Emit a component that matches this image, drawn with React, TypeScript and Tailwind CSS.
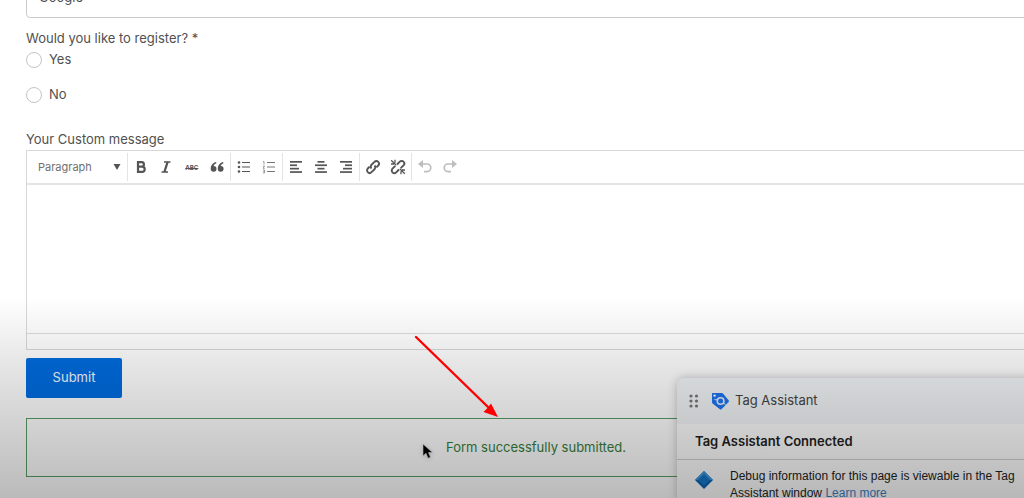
import type { ReactNode } from 'react';

type Tool = { label: string; icon: ReactNode; disabled?: boolean };

const bars = (rows: number[][]) => (
  <svg viewBox="0 0 14 14" className="size-3.5" fill="currentColor">
    {rows.map(([x, w], i) => (
      <rect key={i} x={x} y={1 + i * 3.4} width={w} height={1.7} />
    ))}
  </svg>
);

const undoIcon = (
  <svg viewBox="0 0 16 16" className="size-4" fill="none" stroke="currentColor" strokeWidth="1.7">
    <path d="M4 5h6a3.8 3.8 0 0 1 0 7.6H7" />
    <path d="M6 1v8L1 5z" fill="currentColor" stroke="none" />
  </svg>
);

const redoIcon = (
  <svg viewBox="0 0 16 16" className="size-4" fill="none" stroke="currentColor" strokeWidth="1.7">
    <path d="M12 5H6a3.8 3.8 0 0 0 0 7.6h3" />
    <path d="M10 1v8l5-4z" fill="currentColor" stroke="none" />
  </svg>
);

const textTools: Tool[] = [
  {
    label: 'Bold',
    icon: (
      <svg viewBox="0 0 14 14" className="size-3.5" fill="none" stroke="currentColor" strokeWidth="2.2">
        <path d="M4 2.1h3.6a2.3 2.3 0 0 1 0 4.6H4zM4 6.7h4.1a2.6 2.6 0 0 1 0 5.2H4z" />
      </svg>
    ),
  },
  {
    label: 'Italic',
    icon: (
      <svg viewBox="0 0 14 14" className="size-3.5" fill="none" stroke="currentColor">
        <path d="M5 2h6.5M2.5 12H9" strokeWidth="1.5" />
        <path d="M8.6 2L5.4 12" strokeWidth="2.3" />
      </svg>
    ),
  },
  {
    label: 'Strikethrough',
    icon: <span className="text-[6px] font-bold line-through">ABC</span>,
  },
  {
    label: 'Blockquote',
    icon: (
      <svg viewBox="0 0 14 14" className="size-3.5" fill="currentColor">
        <path d="M6.2 2C3 2.6.7 5 .7 8.9a2.9 2.9 0 1 0 3-3c.2-1.2 1.1-2 2.5-2.4z" />
        <path d="M13.3 2C10.1 2.6 7.8 5 7.8 8.9a2.9 2.9 0 1 0 3-3c.2-1.2 1.1-2 2.5-2.4z" />
      </svg>
    ),
  },
];

const listTools: Tool[] = [
  {
    label: 'Bullet list',
    icon: (
      <svg viewBox="0 0 14 14" className="size-3.5" fill="currentColor">
        <circle cx="2" cy="2.5" r="1.3" />
        <circle cx="2" cy="7" r="1.3" />
        <circle cx="2" cy="11.5" r="1.3" />
        <path d="M5 2h8v1H5zM5 6.5h8v1H5zM5 11h8v1H5z" />
      </svg>
    ),
  },
  {
    label: 'Numbered list',
    icon: (
      <svg viewBox="0 0 14 14" className="size-3.5 opacity-80" fill="none" stroke="currentColor">
        <path d="M1 1.5h1v3M.8 6h1.8L1 8.3h1.7M.8 10h1.8v3H.8M1.2 11.5h1.4" strokeWidth=".7" />
        <path d="M5 2.5h8M5 7h8M5 11.5h8" />
      </svg>
    ),
  },
];

const alignTools: Tool[] = [
  { label: 'Align left', icon: bars([[1, 12], [1, 7], [1, 9], [1, 12]]) },
  { label: 'Align center', icon: bars([[3.5, 7], [1, 12], [3.5, 7], [1, 12]]) },
  { label: 'Align right', icon: bars([[1, 12], [6, 7], [4, 9], [1, 12]]) },
];

const linkTools: Tool[] = [
  {
    label: 'Insert link',
    icon: (
      <svg viewBox="0 0 16 16" className="size-4" fill="none" stroke="currentColor" strokeWidth="1.9">
        <path d="M6.5 9.5a2.6 2.6 0 0 1 0-3.7l3-3a2.6 2.6 0 0 1 3.7 3.7l-1.8 1.8" />
        <path d="M9.5 6.5a2.6 2.6 0 0 1 0 3.7l-3 3a2.6 2.6 0 0 1-3.7-3.7l1.8-1.8" />
      </svg>
    ),
  },
  {
    label: 'Remove link',
    icon: (
      <svg viewBox="0 0 16 16" className="size-4" fill="none" stroke="currentColor" strokeWidth="1.9">
        <path d="M7 5.500l2.800-2.800a2.600 2.600 0 0 1 3.700 3.700L10.700 9.200M9 10.500l-2.800 2.800a2.600 2.600 0 0 1-3.700-3.700L5.300 6.800" />
        <path d="M1.200 1.200l5 5M1 5h3M5 .8v3M14.800 14.800l-5-5M15 11h-3M11 15.200v-3" strokeWidth="1.300" />
      </svg>
    ),
  },
];

const historyTools: Tool[] = [
  { label: 'Undo', icon: undoIcon, disabled: true },
  { label: 'Redo', icon: redoIcon, disabled: true },
];

function ToolGroup({ tools, className }: { tools: Tool[]; className: string }) {
  return (
    <div className={`flex shrink-0 border-l border-[#e4e4e4] ${className}`}>
      {tools.map((tool) => (
        <button
          key={tool.label}
          type="button"
          aria-label={tool.label}
          disabled={tool.disabled}
          className="flex flex-1 items-center justify-center text-[#555] disabled:text-[#bdbdbd]"
        >
          {tool.icon}
        </button>
      ))}
    </div>
  );
}

function Choice({ label }: { label: string }) {
  return (
    <label className="flex h-5 items-center gap-[7px]">
      <input
        type="radio"
        name="register"
        value={label}
        className="size-4 appearance-none rounded-full border border-[#c4c4c4] bg-white checked:border-4 checked:border-[#0064cd]"
      />
      {label}
    </label>
  );
}

function TagAssistant() {
  return (
    <aside className="absolute top-[378px] -right-10 left-[677px] overflow-hidden rounded-tl-lg bg-[#fcfcfc] font-['Liberation_Sans',Arial,sans-serif] text-[#222] shadow-[0_0_10px_rgba(0,0,0,0.25)]">
      <header className="flex h-[46px] items-center bg-[#f1f4f6] pl-3 font-[Inter,sans-serif] text-[13px] text-[#444]">
        <svg viewBox="0 0 10 16" className="h-4 w-2.5" fill="#777">
          {[3, 8, 13].map((y) => (
            <g key={y}>
              <circle cx="2" cy={y} r="1.6" />
              <circle cx="7.5" cy={y} r="1.6" />
            </g>
          ))}
        </svg>
        <svg viewBox="0 0 18 18" className="ml-3 size-[18px]">
          <path d="M1.500 1h9a2 2 0 0 1 1.500.6l5.400 6.500a1.500 1.500 0 0 1 0 2.100l-6.700 6.900a1.500 1.500 0 0 1-2.100 0L1.800 11.800a2 2 0 0 1-.8-1.500V1.500a.5.5 0 0 1 .5-.5z" fill="#1f74f0" />
          <circle cx="3.600" cy="3.600" r="1.200" fill="#fff" />
          <circle cx="9.600" cy="9" r="3.300" fill="none" stroke="#e4efff" strokeWidth="1.600" />
          <path d="M3.500 7.500L6.500 8M12.500 11l2 1.500" fill="none" stroke="#e4efff" strokeWidth="1" />
        </svg>
        <span className="ml-1.5">Tag Assistant</span>
      </header>
      <h2 className="flex h-9 items-center border-b border-[#d0d0d0] pl-[18px] font-[Inter,sans-serif] text-[13px] font-semibold">
        Tag Assistant Connected
      </h2>
      <div className="flex gap-4 pt-2 pl-[17px]">
        <svg viewBox="0 0 20 20" className="mt-0.5 size-5 shrink-0">
          <path d="M10 1l9 9-9 9-9-9z" fill="#0b63ae" />
          <path d="M10 1l9 9H1z" fill="#3e97e2" />
          <path d="M10 4l6 6-6 6-6-6z" fill="#1675c8" />
        </svg>
        <p className="text-xs leading-[17px] whitespace-nowrap">
          Debug information for this page is viewable in the Tag
          <br />
          Assistant window <a href="#learn" className="text-[#3a80c4] underline">Learn more</a>
        </p>
      </div>
    </aside>
  );
}

export default function App() {
  return (
    <main className="relative h-screen overflow-hidden bg-white font-[Inter,sans-serif] text-[13px] text-[#505050]">
      <form className="-mt-[22px] -mr-[22px] ml-[26px] flex flex-col" onSubmit={(e) => e.preventDefault()}>
        <div className="relative">
          <select
            aria-label="Source"
            className="h-10 w-full appearance-none rounded-sm border border-[#cacaca] bg-white px-3"
          >
            <option>Google</option>
          </select>
          <svg viewBox="0 0 10 6" className="pointer-events-none absolute top-[17px] right-6 h-1.5 w-2.5" fill="none" stroke="#999">
            <path d="M1 1l4 4 4-4" />
          </svg>
        </div>

        <fieldset className="mt-2.5 flex flex-col">
          <legend className="contents">
            <span className="h-5 leading-5">Would you like to register? *</span>
          </legend>
          <div className="mt-0.5 flex flex-col gap-[15px]">
            <Choice label="Yes" />
            <Choice label="No" />
          </div>
        </fieldset>

        <label htmlFor="message" className="mt-6 h-5 leading-5">
          Your Custom message
        </label>
        <section className="mt-px border border-[#d8d8d8]">
          <div className="flex h-[34px] border-b-2 border-[#e4e4e4] py-0.5">
            <div className="relative flex w-[100px] shrink-0 items-center">
              <select
                aria-label="Block format"
                className="w-full appearance-none bg-transparent pl-[11px] text-[11px] text-[#707070]"
              >
                <option>Paragraph</option>
              </select>
              <svg viewBox="0 0 8 6" className="pointer-events-none absolute right-1.5 h-1.5 w-2" fill="#555">
                <path d="M.5 0h7L4 6z" />
              </svg>
            </div>
            <ToolGroup tools={textTools} className="w-[103px]" />
            <ToolGroup tools={listTools} className="w-[52px]" />
            <ToolGroup tools={alignTools} className="w-[77px]" />
            <ToolGroup tools={linkTools} className="w-[52px]" />
            <ToolGroup tools={historyTools} className="w-[52px]" />
          </div>
          <textarea id="message" className="block h-[148px] w-full resize-none bg-transparent p-3 outline-none" />
          <div className="h-4 border-t border-[#dcdcdc]" />
        </section>

        <button type="submit" className="mt-2 h-10 w-24 rounded-xs bg-[#006ce0] text-[#f4faff]">
          Submit
        </button>

        <p role="status" className="mt-5 flex h-[59px] items-center justify-center border border-[#5a9c66] text-[#367e3a]">
          Form successfully submitted.
        </p>
      </form>

      <TagAssistant />

      <div className="pointer-events-none absolute inset-x-0 bottom-0 h-[200px] bg-linear-to-b from-black/0 via-black/10 via-33% to-black/27" />

      <svg viewBox="0 0 90 90" className="pointer-events-none absolute top-[330px] left-[410px] size-[90px]">
        <path d="M6 7l73 71" fill="none" stroke="#f00" strokeWidth="2.4" strokeLinecap="round" />
        <path d="M88 87l-14.500-5 3.500-3.500 4-5z" fill="#f00" />
      </svg>
      <svg viewBox="0 0 12 18" className="pointer-events-none absolute top-[443px] left-[422px] h-[18px] w-3 drop-shadow-sm">
        <path d="M1 1v12l3-2.700 2 5 2.500-1-2-4.700h4z" fill="#000" stroke="#bbb" strokeWidth=".6" />
      </svg>
    </main>
  );
}
